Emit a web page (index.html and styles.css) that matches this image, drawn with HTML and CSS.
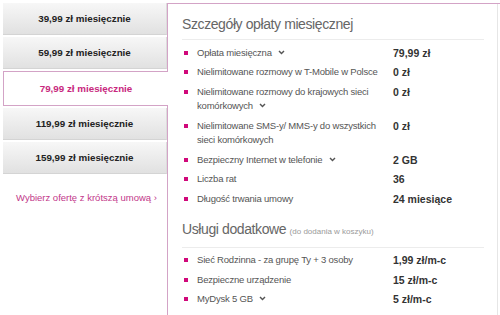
FILE: index.html
```html
<!DOCTYPE html>
<html>
<head>
  <meta charset="UTF-8">
  <title>Szczegóły oferty</title>
  <link rel="stylesheet" href="styles.css">
</head>
<body>
  <div class="offer">
    <div class="plans">
      <div class="plan-tab">39,99 zł miesięcznie</div>
      <div class="plan-tab">59,99 zł miesięcznie</div>
      <div class="plan-tab selected">79,99 zł miesięcznie</div>
      <div class="plan-tab">119,99 zł miesięcznie</div>
      <div class="plan-tab">159,99 zł miesięcznie</div>
      <a class="plan-link" href="#">Wybierz ofertę z krótszą umową ›</a>
    </div>

    <div class="plan-panel">
      <div class="plan-details">
        <h2 class="section-title">Szczegóły opłaty miesięcznej</h2>
        <ul class="fee-list">
          <li class="fee-item">
            <span class="fee-bullet"></span>
            <span class="fee-name">Opłata miesięczna <svg class="chevron" width="7" height="5" viewBox="0 0 7 5"><polyline points="1,1 3.5,3.6 6,1" fill="none" stroke="#555" stroke-width="1.4"/></svg></span>
            <span class="fee-value">79,99 zł</span>
          </li>
          <li class="fee-item">
            <span class="fee-bullet"></span>
            <span class="fee-name">Nielimitowane rozmowy w T-Mobile w Polsce</span>
            <span class="fee-value">0 zł</span>
          </li>
          <li class="fee-item">
            <span class="fee-bullet"></span>
            <span class="fee-name">Nielimitowane rozmowy do krajowych sieci komórkowych <svg class="chevron" width="7" height="5" viewBox="0 0 7 5"><polyline points="1,1 3.5,3.6 6,1" fill="none" stroke="#555" stroke-width="1.4"/></svg></span>
            <span class="fee-value">0 zł</span>
          </li>
          <li class="fee-item">
            <span class="fee-bullet"></span>
            <span class="fee-name">Nielimitowane SMS-y/ MMS-y do wszystkich sieci komórkowych</span>
            <span class="fee-value">0 zł</span>
          </li>
          <li class="fee-item">
            <span class="fee-bullet"></span>
            <span class="fee-name">Bezpieczny Internet w telefonie <svg class="chevron" width="7" height="5" viewBox="0 0 7 5"><polyline points="1,1 3.5,3.6 6,1" fill="none" stroke="#555" stroke-width="1.4"/></svg></span>
            <span class="fee-value">2 GB</span>
          </li>
          <li class="fee-item">
            <span class="fee-bullet"></span>
            <span class="fee-name">Liczba rat</span>
            <span class="fee-value">36</span>
          </li>
          <li class="fee-item">
            <span class="fee-bullet"></span>
            <span class="fee-name">Długość trwania umowy</span>
            <span class="fee-value">24 miesiące</span>
          </li>
        </ul>

        <h2 class="section-title extra">Usługi dodatkowe <small>(do dodania w koszyku)</small></h2>
        <ul class="fee-list extra">
          <li class="fee-item">
            <span class="fee-bullet"></span>
            <span class="fee-name">Sieć Rodzinna - za grupę Ty + 3 osoby</span>
            <span class="fee-value">1,99 zł/m-c</span>
          </li>
          <li class="fee-item">
            <span class="fee-bullet"></span>
            <span class="fee-name">Bezpieczne urządzenie</span>
            <span class="fee-value">15 zł/m-c</span>
          </li>
          <li class="fee-item">
            <span class="fee-bullet"></span>
            <span class="fee-name">MyDysk 5 GB <svg class="chevron" width="7" height="5" viewBox="0 0 7 5"><polyline points="1,1 3.5,3.6 6,1" fill="none" stroke="#555" stroke-width="1.4"/></svg></span>
            <span class="fee-value">5 zł/m-c</span>
          </li>
        </ul>
      </div>
    </div>
  </div>
</body>
</html>
```

FILE: styles.css
```css
body {
  font-family: "Liberation Sans", Arial, sans-serif;
  margin: 0;
  background-color: white;
  color: #555;
}

.offer {
  display: flex;
  height: 315px;
  overflow: hidden;
}

.plans {
  width: 164px;
  padding: 3px 0 0 3px;
  display: flex;
  flex-direction: column;
}

.plan-tab {
  height: 32px;
  margin-bottom: 2px;
  box-sizing: border-box;
  display: flex;
  align-items: center;
  justify-content: center;
  background: linear-gradient(#f7f7f7, #e1e1e1);
  border-bottom: 1px solid #d4d4d4;
  border-right: 1px solid #dcdcdc;
  color: #222;
  font-size: 9.8px;
  font-weight: bold;
}

.plan-tab.selected {
  position: relative;
  z-index: 1;
  height: 35px;
  margin-right: -1px;
  background: white;
  border: 1px solid #d3a3c6;
  border-right: none;
  color: #c8287e;
}

.plan-link {
  margin: 16px 0 0 13px;
  color: #c2378a;
  font-size: 9.5px;
  text-decoration: none;
}

.plan-panel {
  flex: 1;
  margin-top: 3px;
  border-top: 1px solid #d3a3c6;
  border-left: 1px solid #d3a3c6;
}

.plan-details {
  margin-right: 2px;
  height: 100%;
  padding: 10px 13px 0 14px;
  border-right: 1px solid #e6e6e6;
}

.section-title {
  margin: 0;
  padding-bottom: 5px;
  border-bottom: 1px solid #ececec;
  font-size: 14px;
  line-height: 20px;
  font-weight: normal;
  letter-spacing: -0.4px;
  color: #666;
}

.section-title.extra {
  margin-top: 10px;
}

.section-title small {
  font-size: 8px;
  letter-spacing: 0;
  color: #9a9a9a;
}

.fee-list {
  list-style: none;
  margin: 0;
  padding: 3px 0 0 2px;
}

.fee-list.extra {
  padding-top: 3px;
}

.fee-item {
  display: grid;
  grid-template-columns: 13px 196px 1fr;
  align-items: start;
  padding: 2.5px 0;
  line-height: 14.5px;
  font-size: 9.5px;
  letter-spacing: -0.2px;
}

.fee-bullet {
  width: 4px;
  height: 4px;
  margin-top: 5px;
  background-color: #d0087a;
}

.fee-name {
  padding-right: 6px;
}

.chevron {
  margin-left: 4px;
  vertical-align: 1px;
}

.fee-value {
  font-size: 10.5px;
  font-weight: bold;
  letter-spacing: 0;
  color: #333;
}
```
